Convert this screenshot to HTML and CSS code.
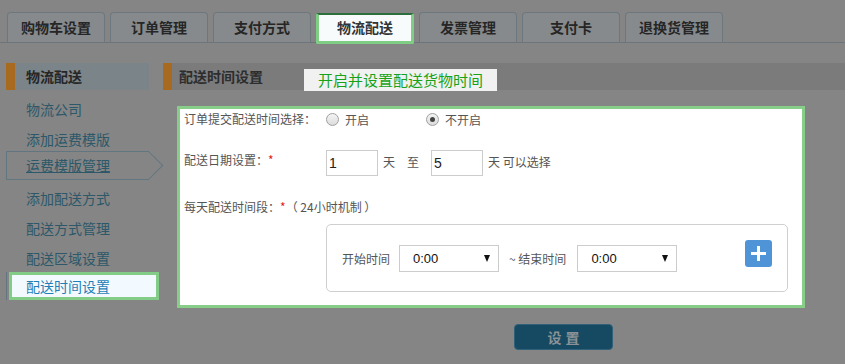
FILE: index.html
```html
<!DOCTYPE html>
<html lang="zh-CN">
<head>
    <meta charset="UTF-8">
    <title>物流配送 - 配送时间设置</title>
    <link rel="stylesheet" href="styles.css">
</head>
<body>
    <div class="tabs">
        <div class="tab">购物车设置</div>
        <div class="tab">订单管理</div>
        <div class="tab">支付方式</div>
        <div class="tab active">物流配送</div>
        <div class="tab">发票管理</div>
        <div class="tab">支付卡</div>
        <div class="tab">退换货管理</div>
    </div>

    <div class="page">
        <div class="side">
            <div class="side-title">物流配送</div>
            <ul class="side-menu">
                <li>物流公司</li>
                <li>添加运费模版</li>
                <li class="current"><span>运费模版管理</span></li>
                <li>添加配送方式</li>
                <li>配送方式管理</li>
                <li>配送区域设置</li>
                <li class="focus"><div class="focus-inner">配送时间设置</div></li>
            </ul>
        </div>

        <div class="main">
            <div class="main-title">
                <h2>配送时间设置</h2>
                <div class="tip">开启并设置配送货物时间</div>
            </div>

            <div class="form-box">
                <div class="row row-radio">
                    <label class="label">订单提交配送时间选择：</label>
                    <span class="option"><i class="radio"></i>开启</span>
                    <span class="option"><i class="radio checked"></i>不开启</span>
                </div>

                <div class="row row-days">
                    <label class="label">配送日期设置：<em>*</em></label>
                    <input type="text" class="num-input" value="1">
                    <span class="unit">天</span>
                    <span class="unit to">至</span>
                    <input type="text" class="num-input" value="5">
                    <span class="unit">天 可以选择</span>
                </div>

                <div class="row row-period">
                    <label>每天配送时间段：<em>*</em>（ 24小时机制 ）</label>
                </div>

                <div class="period-box">
                    <span class="period-label">开始时间</span>
                    <div class="time-select">0:00<b></b></div>
                    <span class="period-label end">~ 结束时间</span>
                    <div class="time-select">0:00<b></b></div>
                    <div class="add-btn">
                        <svg width="15" height="15" viewBox="0 0 15 15"><path d="M6 0h3v6h6v3H9v6H6V9H0V6h6z" fill="#fff"/></svg>
                    </div>
                </div>
            </div>

            <button class="save-btn">设置</button>
        </div>
    </div>
</body>
</html>
```

FILE: styles.css
```css
* {
    margin: 0;
    padding: 0;
    box-sizing: border-box;
}

body {
    background: #858585;
    font-family: "Noto Sans CJK SC", "Microsoft YaHei", sans-serif;
    width: 845px;
    height: 364px;
    overflow: hidden;
}

/* top tabs */
.tabs {
    display: flex;
    gap: 5px;
    padding: 12px 0 0 7px;
    height: 43px;
    border-bottom: 1px solid #6b757b;
}

.tab {
    width: 98px;
    height: 30px;
    border: 1px solid #6d787e;
    border-bottom: none;
    border-radius: 4px 4px 0 0;
    background: #878a8c;
    color: #262626;
    font-size: 14px;
    font-weight: bold;
    line-height: 28px;
    text-align: center;
}

.tab.active {
    height: 31px;
    margin-top: 1px;
    background: #f8fbfc;
    border: 3px solid #80cd86;
    border-top: 2px solid #2c6e3c;
    border-radius: 2px;
    color: #333;
    line-height: 25px;
}

/* layout */
.page {
    display: flex;
    padding-top: 20px;
}

.side {
    width: 158px;
    padding-left: 6px;
}

.side-title {
    width: 143px;
    height: 27px;
    background: #7b8489;
    border-left: 9px solid #a86a1f;
    padding-left: 11px;
    color: #262626;
    font-size: 14px;
    font-weight: bold;
    line-height: 27px;
}

.side-menu {
    list-style: none;
    margin-top: 4px;
}

.side-menu li {
    height: 30px;
    padding-left: 20px;
    color: #2c5869;
    font-size: 14px;
    line-height: 30px;
}

.side-menu li.current {
    position: relative;
    width: 143px;
    height: 29px;
    margin-top: -3px;
    margin-bottom: 3px;
    border: 1px solid #617680;
    border-right: none;
    padding-left: 19px;
    line-height: 27px;
}

.side-menu li.current span {
    text-decoration: underline;
}

.side-menu li.current::after {
    content: "";
    position: absolute;
    right: -10px;
    top: 3px;
    width: 20px;
    height: 20px;
    border-top: 1px solid #617680;
    border-right: 1px solid #617680;
    transform: rotate(45deg);
}

.side-menu li.focus {
    position: relative;
    height: 28px;
    margin-top: -1px;
    padding-left: 0;
    border-left: 1px solid #617680;
}

.focus-inner {
    width: 150px;
    height: 28px;
    margin-left: 2px;
    border: 3px solid #82cc88;
    background: #f3faff;
    padding-left: 14px;
    color: #1f7fb6;
    line-height: 22px;
}

/* main */
.main {
    width: 682px;
    margin-left: 5px;
}

.main-title {
    display: flex;
    height: 27px;
    background: #7b7b7b;
    border-left: 9px solid #a86a1f;
    padding-left: 7px;
}

.main-title h2 {
    color: #2d2d2d;
    font-size: 14px;
    line-height: 27px;
}

.tip {
    height: 22px;
    margin: 6px 0 0 41px;
    padding: 0 14px;
    background: #f1f1f1;
    color: #17a317;
    font-size: 15px;
    line-height: 22px;
}

.form-box {
    width: 628px;
    height: 202px;
    margin: 16px 0 0 14px;
    border: 3px solid #87cf89;
    background: #fff;
    padding-left: 4px;
    color: #555;
    font-size: 12px;
}

.row {
    display: flex;
    align-items: center;
}

.label {
    width: 142px;
    line-height: 20px;
}

em {
    color: #e41b1b;
    font-style: normal;
}

.row-radio {
    height: 20px;
}

.option {
    display: flex;
    align-items: center;
    width: 100px;
}

.radio {
    width: 13px;
    height: 13px;
    margin-right: 6px;
    border: 1px solid #a0a0a0;
    border-radius: 50%;
    background: linear-gradient(#f4f4f4, #dcdcdc);
    position: relative;
}

.radio.checked::after {
    content: "";
    position: absolute;
    left: 3px;
    top: 3px;
    width: 5px;
    height: 5px;
    border-radius: 50%;
    background: #444;
}

.row-days {
    height: 26px;
    margin-top: 21px;
    align-items: flex-start;
}

.num-input {
    width: 52px;
    height: 26px;
    border: 1px solid #ccc;
    padding-left: 2px;
    font-family: "Liberation Sans", Arial, sans-serif;
    font-size: 14px;
    color: #222;
    outline: none;
}

.unit {
    margin: 0 5px;
    line-height: 24px;
    font-size: 12px;
}

.unit.to {
    margin: 0 12px 0 7px;
}

.row-period {
    margin-top: 21px;
    line-height: 20px;
}

.period-box {
    display: flex;
    align-items: center;
    width: 462px;
    height: 68px;
    margin: 7px 0 0 142px;
    border: 1px solid #cfcfcf;
    border-radius: 5px;
    padding: 0 15px;
    font-size: 12px;
}

.period-label {
    margin-right: 9px;
}

.period-label.end {
    margin: 0 11px 0 10px;
}

.time-select {
    position: relative;
    width: 100px;
    height: 27px;
    border: 1px solid #ccc;
    padding-left: 13px;
    color: #111;
    font-family: "Liberation Sans", Arial, sans-serif;
    font-size: 13px;
    line-height: 25px;
}

.time-select b {
    position: absolute;
    right: 8px;
    top: 9px;
    border-left: 3px solid transparent;
    border-right: 3px solid transparent;
    border-top: 7px solid #111;
}

.add-btn {
    display: flex;
    align-items: center;
    justify-content: center;
    width: 27px;
    height: 27px;
    margin-left: auto;
    align-self: flex-start;
    margin-top: 15px;
    border-radius: 3px;
    background: #4f94d6;
}

.save-btn {
    display: block;
    width: 99px;
    height: 26px;
    margin: 16px 0 0 351px;
    border: 1px solid #30607a;
    border-radius: 4px;
    background: #164a62;
    color: #8b9297;
    font-family: "Noto Sans CJK SC", sans-serif;
    font-size: 14px;
    font-weight: bold;
    letter-spacing: 4px;
    text-indent: 4px;
}
```
